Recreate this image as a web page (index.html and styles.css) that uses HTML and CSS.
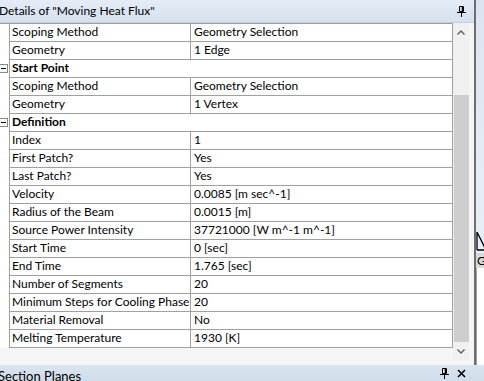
FILE: index.html
```html
<!DOCTYPE html>
<html>
<head>
<meta charset="utf-8">
<link rel="stylesheet" href="styles.css">
</head>
<body>
<div class="window">
  <div class="main">
    <div class="titlebar">
      <span class="title">Details of "Moving Heat Flux"</span>
      <svg class="pin" width="9" height="11" viewBox="0 0 9 11"><path d="M2.5 0.5h4v5h-4z" fill="none" stroke="#000"/><path d="M5.5 0.5v5" stroke="#000" stroke-width="1.5"/><path d="M0 6.5h9" stroke="#000"/><path d="M4.5 6.5v4.5" stroke="#000"/></svg>
    </div>
    <div class="body">
      <div class="grid">
        <div class="row"><div class="gutter"></div><div class="name">Scoping Method</div><div class="val">Geometry Selection</div></div>
        <div class="row"><div class="gutter"></div><div class="name">Geometry</div><div class="val">1 Edge</div></div>
        <div class="row group"><div class="gutter"><svg class="minus" width="9" height="9" viewBox="0 0 9 9"><rect x="-0.5" y="0.5" width="8" height="8" fill="#fff" stroke="#8a8a8a"/><path d="M1 4.5h5" stroke="#000"/></svg></div><div class="head">Start Point</div></div>
        <div class="row"><div class="gutter"></div><div class="name">Scoping Method</div><div class="val">Geometry Selection</div></div>
        <div class="row"><div class="gutter"></div><div class="name">Geometry</div><div class="val">1 Vertex</div></div>
        <div class="row group"><div class="gutter"><svg class="minus" width="9" height="9" viewBox="0 0 9 9"><rect x="-0.5" y="0.5" width="8" height="8" fill="#fff" stroke="#8a8a8a"/><path d="M1 4.5h5" stroke="#000"/></svg></div><div class="head">Definition</div></div>
        <div class="row"><div class="gutter"></div><div class="name">Index</div><div class="val">1</div></div>
        <div class="row"><div class="gutter"></div><div class="name">First Patch?</div><div class="val">Yes</div></div>
        <div class="row"><div class="gutter"></div><div class="name">Last Patch?</div><div class="val">Yes</div></div>
        <div class="row"><div class="gutter"></div><div class="name">Velocity</div><div class="val">0.0085 [m sec^-1]</div></div>
        <div class="row"><div class="gutter"></div><div class="name">Radius of the Beam</div><div class="val">0.0015 [m]</div></div>
        <div class="row"><div class="gutter"></div><div class="name">Source Power Intensity</div><div class="val">37721000 [W m^-1 m^-1]</div></div>
        <div class="row"><div class="gutter"></div><div class="name">Start Time</div><div class="val">0 [sec]</div></div>
        <div class="row"><div class="gutter"></div><div class="name">End Time</div><div class="val">1.765 [sec]</div></div>
        <div class="row"><div class="gutter"></div><div class="name">Number of Segments</div><div class="val">20</div></div>
        <div class="row"><div class="gutter"></div><div class="name">Minimum Steps for Cooling Phase</div><div class="val">20</div></div>
        <div class="row"><div class="gutter"></div><div class="name">Material Removal</div><div class="val">No</div></div>
        <div class="row"><div class="gutter"></div><div class="name">Melting Temperature</div><div class="val">1930 [K]</div></div>
      </div>
      <div class="vscroll">
        <div class="arrow up"><svg width="8" height="5" viewBox="0 0 8 5"><path d="M0.5 4.5L4 1L7.5 4.5" fill="none" stroke="#606060" stroke-width="1.4"/></svg></div>
        <div class="track"><div class="thumb"></div></div>
        <div class="arrow down"><svg width="8" height="5" viewBox="0 0 8 5"><path d="M0.5 0.5L4 4L7.5 0.5" fill="none" stroke="#606060" stroke-width="1.4"/></svg></div>
      </div>
    </div>
  </div>
  <div class="edge"></div>
  <div class="side">
    <div class="sidetop"></div>
    <svg class="triad" width="9" height="20" viewBox="0 0 9 20"><path d="M1 1L1 19M1 1L9 17M1 19H9" fill="none" stroke="#000" stroke-width="1.3"/></svg>
    <div class="tab">G</div>
    <div class="sidebox"></div>
  </div>
  <div class="sectionbar">
    <span class="title">Section Planes</span>
    <div class="icons">
      <svg class="pin" width="9" height="11" viewBox="0 0 9 11"><path d="M2.5 0.5h4v5h-4z" fill="none" stroke="#000"/><path d="M5.5 0.5v5" stroke="#000" stroke-width="1.5"/><path d="M0 6.5h9" stroke="#000"/><path d="M4.5 6.5v4.5" stroke="#000"/></svg>
      <svg class="close" width="9" height="9" viewBox="0 0 9 9"><path d="M1 1L8 8M8 1L1 8" stroke="#000" stroke-width="1.6"/></svg>
    </div>
  </div>
</div>
</body>
</html>
```

FILE: styles.css
```css
html, body {
  margin: 0;
  padding: 0;
}
body {
  width: 484px;
  height: 381px;
  overflow: hidden;
  background: #f0f0f0;
  font-family: Lato, "Noto Sans", sans-serif;
  font-size: 12px;
  color: #000;
}
.window {
  display: grid;
  grid-template-columns: 474px 2px 8px;
  grid-template-rows: 365px 16px;
  width: 484px;
  height: 381px;
}
.main {
  display: flex;
  flex-direction: column;
  background: #f5f5f5;
}
.titlebar {
  height: 22px;
  border-bottom: 1px solid #c6cfd9;
  background: linear-gradient(#e4ecf6, #d5e1ee);
  display: flex;
  align-items: center;
  justify-content: space-between;
  padding-right: 8px;
}
.title {
  font-size: 12px;
  margin-left: -1px;
  line-height: 22px;
  white-space: nowrap;
}
.pin {
  display: block;
}
.body {
  display: flex;
  align-items: flex-start;
}
.grid {
  width: 453px;
  background: #fff;
  border-top: 1px solid #a0a0a0;
}
.row {
  display: flex;
  height: 18px;
}
.gutter {
  width: 10px;
  border-right: 1px solid #a0a0a0;
  box-sizing: border-box;
  background: #fff;
  display: flex;
  align-items: center;
}
.name, .val, .head {
  box-sizing: border-box;
  border-bottom: 1px solid #a0a0a0;
  border-right: 1px solid #a0a0a0;
  height: 18px;
  line-height: 16px;
  padding-left: 2px;
  white-space: nowrap;
  overflow: hidden;
}
.name { width: 181px; }
.val { width: 262px; padding-left: 3px; }
.head { width: 443px; font-weight: bold; }
.minus {
  display: block;
  margin-top: -1px;
}
.vscroll {
  width: 16px;
  height: 337px;
  display: flex;
  flex-direction: column;
  background: #f0f0f0;
}
.arrow {
  height: 18px;
  display: flex;
  align-items: center;
  justify-content: center;
}
.track {
  flex: 1;
  padding-top: 54px;
  display: flex;
  flex-direction: column;
}
.thumb {
  margin-left: 1px;
  width: 15px;
  height: 247px;
  background: #cdcdcd;
}
.edge {
  background: #6e6e6e;
}
.side {
  display: flex;
  flex-direction: column;
  background: linear-gradient(#dbe5f1, #eef3f9);
}
.sidetop {
  height: 231px;
}
.triad {
  display: block;
}
.tab {
  margin-top: 2px;
  height: 15px;
  background: #d9d9d9;
  font-size: 12px;
  line-height: 15px;
  padding-left: 1px;
  overflow: hidden;
}
.sidebox {
  flex: 1;
  background: #fff;
  border-left: 1px solid #a0a0a0;
}
.sectionbar {
  grid-column: 1 / 4;
  background: linear-gradient(#dbe5f1, #cfdcea);
  display: flex;
  align-items: flex-end;
  justify-content: space-between;
  overflow: hidden;
}
.sectionbar .title {
  font-size: 13px;
  line-height: 16px;
  margin-bottom: -3px;
  margin-left: -2px;
}
.icons {
  display: flex;
  align-items: center;
  gap: 8px;
  padding-right: 18px;
  height: 16px;
}
```
